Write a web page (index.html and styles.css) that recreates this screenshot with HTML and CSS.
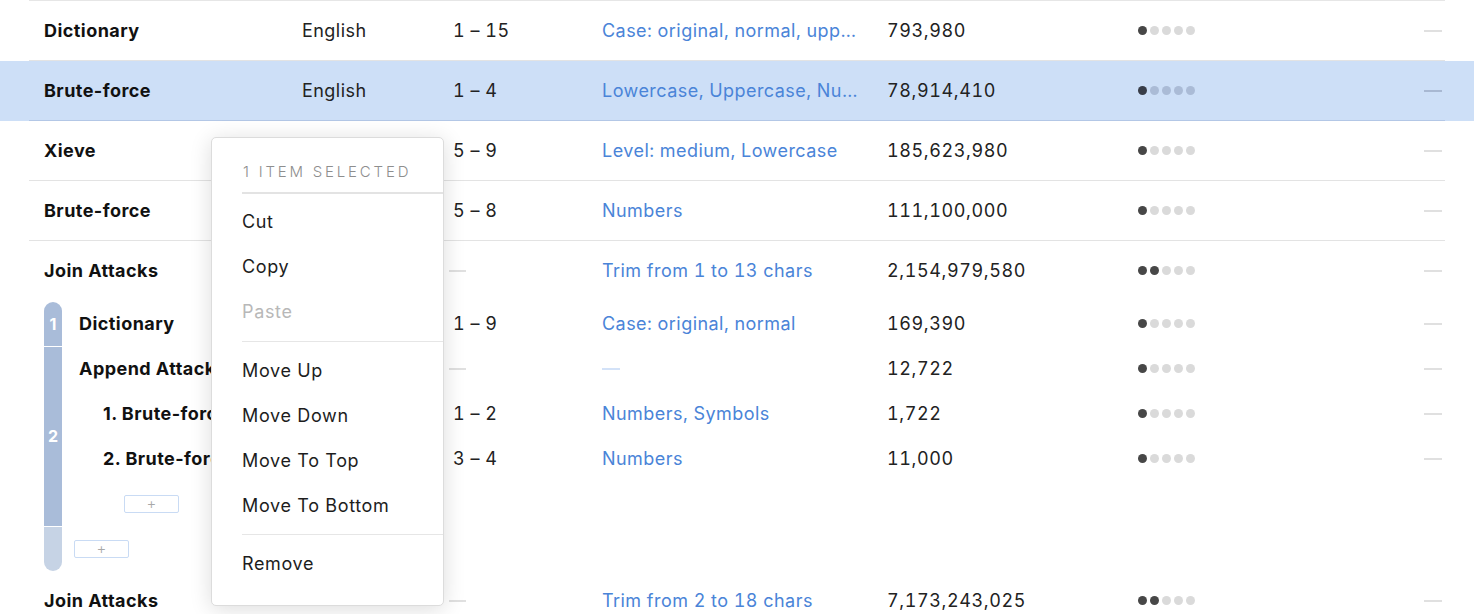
FILE: index.html
```html
<!DOCTYPE html>
<html>
<head>
<meta charset="utf-8">
<link rel="stylesheet" href="styles.css">
</head>
<body>
<div class="page">
  <div class="table">
    <div class="row">
      <div class="row-inner">
        <div class="c-name">Dictionary</div>
        <div class="c-lang">English</div>
        <div class="c-len">1 – 15</div>
        <div class="c-rules"><span class="ellip">Case: original, normal, uppercase, lowercase</span></div>
        <div class="c-count">793,980</div>
        <div class="c-dots"><span class="dots"><i class="on"></i><i></i><i></i><i></i><i></i></span></div>
        <div class="c-dash"><span class="dash"></span></div>
      </div>
    </div>
    <div class="row selected">
      <div class="row-inner">
        <div class="c-name">Brute-force</div>
        <div class="c-lang">English</div>
        <div class="c-len">1 – 4</div>
        <div class="c-rules"><span class="ellip">Lowercase, Uppercase, Numbers, Symbols</span></div>
        <div class="c-count">78,914,410</div>
        <div class="c-dots"><span class="dots"><i class="on"></i><i></i><i></i><i></i><i></i></span></div>
        <div class="c-dash"><span class="dash"></span></div>
      </div>
    </div>
    <div class="row">
      <div class="row-inner">
        <div class="c-name">Xieve</div>
        <div class="c-lang">English</div>
        <div class="c-len">5 – 9</div>
        <div class="c-rules"><span class="ellip">Level: medium, Lowercase</span></div>
        <div class="c-count">185,623,980</div>
        <div class="c-dots"><span class="dots"><i class="on"></i><i></i><i></i><i></i><i></i></span></div>
        <div class="c-dash"><span class="dash"></span></div>
      </div>
    </div>
    <div class="row">
      <div class="row-inner">
        <div class="c-name">Brute-force</div>
        <div class="c-lang">English</div>
        <div class="c-len">5 – 8</div>
        <div class="c-rules"><span class="ellip">Numbers</span></div>
        <div class="c-count">111,100,000</div>
        <div class="c-dots"><span class="dots"><i class="on"></i><i></i><i></i><i></i><i></i></span></div>
        <div class="c-dash"><span class="dash"></span></div>
      </div>
    </div>
    <div class="row">
      <div class="row-inner no-border">
        <div class="c-name">Join Attacks</div>
        <div class="c-lang"></div>
        <div class="c-len"><span class="dash"></span></div>
        <div class="c-rules"><span class="ellip">Trim from 1 to 13 chars</span></div>
        <div class="c-count">2,154,979,580</div>
        <div class="c-dots"><span class="dots"><i class="on"></i><i class="on"></i><i></i><i></i><i></i></span></div>
        <div class="c-dash"><span class="dash"></span></div>
      </div>
    </div>

    <div class="group">
      <div class="bar">
        <div class="seg seg-1">1</div>
        <div class="seg seg-2">2</div>
        <div class="seg seg-3"></div>
      </div>
      <div class="sub-rows">
        <div class="sub-row">
          <div class="s-name lvl1">Dictionary</div>
          <div class="c-lang"></div>
          <div class="c-len">1 – 9</div>
          <div class="c-rules"><span class="ellip">Case: original, normal</span></div>
          <div class="c-count">169,390</div>
          <div class="c-dots"><span class="dots"><i class="on"></i><i></i><i></i><i></i><i></i></span></div>
          <div class="c-dash"><span class="dash"></span></div>
        </div>
        <div class="sub-row">
          <div class="s-name lvl1">Append Attack</div>
          <div class="c-lang"></div>
          <div class="c-len"><span class="dash"></span></div>
          <div class="c-rules"><span class="dash blue"></span></div>
          <div class="c-count">12,722</div>
          <div class="c-dots"><span class="dots"><i class="on"></i><i></i><i></i><i></i><i></i></span></div>
          <div class="c-dash"><span class="dash"></span></div>
        </div>
        <div class="sub-row">
          <div class="s-name lvl2">1. Brute-force</div>
          <div class="c-lang"></div>
          <div class="c-len">1 – 2</div>
          <div class="c-rules"><span class="ellip">Numbers, Symbols</span></div>
          <div class="c-count">1,722</div>
          <div class="c-dots"><span class="dots"><i class="on"></i><i></i><i></i><i></i><i></i></span></div>
          <div class="c-dash"><span class="dash"></span></div>
        </div>
        <div class="sub-row">
          <div class="s-name lvl2">2. Brute-force</div>
          <div class="c-lang"></div>
          <div class="c-len">3 – 4</div>
          <div class="c-rules"><span class="ellip">Numbers</span></div>
          <div class="c-count">11,000</div>
          <div class="c-dots"><span class="dots"><i class="on"></i><i></i><i></i><i></i><i></i></span></div>
          <div class="c-dash"><span class="dash"></span></div>
        </div>
        <div class="sub-row add-row">
          <button class="add add-inner">+</button>
        </div>
        <div class="sub-row add-row">
          <button class="add add-outer">+</button>
        </div>
      </div>
    </div>

    <div class="row">
      <div class="row-inner no-border">
        <div class="c-name">Join Attacks</div>
        <div class="c-lang"></div>
        <div class="c-len"><span class="dash"></span></div>
        <div class="c-rules"><span class="ellip">Trim from 2 to 18 chars</span></div>
        <div class="c-count">7,173,243,025</div>
        <div class="c-dots"><span class="dots"><i class="on"></i><i class="on"></i><i></i><i></i><i></i></span></div>
        <div class="c-dash"><span class="dash"></span></div>
      </div>
    </div>
  </div>

  <div class="menu">
    <div class="menu-head">1 ITEM SELECTED</div>
    <div class="menu-sep thick"></div>
    <div class="menu-group first">
      <div class="menu-item">Cut</div>
      <div class="menu-item">Copy</div>
      <div class="menu-item disabled">Paste</div>
    </div>
    <div class="menu-sep"></div>
    <div class="menu-group">
      <div class="menu-item">Move Up</div>
      <div class="menu-item">Move Down</div>
      <div class="menu-item">Move To Top</div>
      <div class="menu-item">Move To Bottom</div>
    </div>
    <div class="menu-sep"></div>
    <div class="menu-group">
      <div class="menu-item">Remove</div>
    </div>
  </div>
</div>
</body>
</html>
```

FILE: styles.css
```css
* { box-sizing: border-box; }
html, body {
  margin: 0;
  padding: 0;
  background: #ffffff;
  overflow: hidden;
}
body {
  font-family: Inter, "Noto Sans", "Liberation Sans", sans-serif;
  font-size: 18px;
  letter-spacing: 0.45px;
  color: #222;
}
.page {
  position: relative;
  width: 1474px;
  height: 614px;
  overflow: hidden;
}
.table {
  border-top: 1px solid #e6e6e6;
  margin: 0 29px;
}
.table > .row {
  margin: 0 -29px;
}
.row-inner {
  margin: 0 29px;
  height: 60px;
  border-bottom: 1px solid #e3e3e3;
  display: grid;
  grid-template-columns: 273px 151px 149px 285px 251px 1fr 21px;
  align-items: center;
}
.row-inner.no-border { border-bottom: none; padding-bottom: 1px; }
.row.selected { background: #cddff7; }
.row.selected .row-inner { border-bottom-color: #b3c7e6; }

.c-name {
  padding-left: 15px;
  font-weight: 700;
  color: #111;
  white-space: nowrap;
}
.c-lang, .c-len, .c-count {
  color: #222;
  white-space: nowrap;
}
.c-len, .c-count, .c-rules { font-variant-numeric: tabular-nums; }
.c-len { letter-spacing: 0.5px; }
.c-count { letter-spacing: 0.6px; }
.c-rules {
  color: #4a84d8;
  white-space: nowrap;
  overflow: hidden;
}
.ellip {
  display: block;
  max-width: 258px;
  overflow: hidden;
  text-overflow: ellipsis;
  white-space: nowrap;
}
.c-dots { display: flex; align-items: center; }
.dots {
  display: inline-flex;
  gap: 3px;
}
.dots i {
  display: block;
  width: 9px;
  height: 9px;
  border-radius: 50%;
  background: #dadada;
}
.dots i.on { background: #474747; }
.row.selected .dots i { background: #aabbd6; }
.row.selected .dots i.on { background: #383d48; }

.c-dash { display: flex; align-items: center; }
.dash {
  display: block;
  width: 18px;
  height: 2px;
  background: #e0e0e0;
}
.c-len .dash { width: 17px; margin-left: -4px; }
.dash.blue { background: #d3e2f8; width: 18px; }
.row.selected .dash { background: #a8b8d2; }

/* nested group */
.group {
  display: flex;
  align-items: flex-start;
  height: 270px;
}
.bar {
  margin-left: 15px;
  margin-top: 1px;
  width: 18px;
  display: flex;
  flex-direction: column;
  gap: 1px;
  flex-shrink: 0;
}
.seg {
  background: #a9bcd9;
  color: #ffffff;
  font-weight: 700;
  font-size: 16px;
  letter-spacing: 0;
  display: flex;
  align-items: center;
  justify-content: center;
}
.seg-1 { height: 44px; border-radius: 9px 9px 0 0; }
.seg-2 { height: 179px; padding-bottom: 2px; }
.seg-3 { height: 44px; background: #c6d3e5; border-radius: 0 0 9px 9px; }

.sub-rows { flex: 1; }
.sub-row {
  height: 45px;
  display: grid;
  grid-template-columns: 240px 151px 149px 285px 251px 1fr 21px;
  align-items: center;
}
.s-name {
  font-weight: 700;
  color: #111;
  white-space: nowrap;
  overflow: hidden;
}
.s-name.lvl1 { padding-left: 17px; }
.s-name.lvl2 { padding-left: 41px; }
.add-row { display: flex; align-items: center; }
.add {
  width: 55px;
  height: 18px;
  border: 1px solid #c9dbf4;
  border-radius: 2px;
  background: #fff;
  color: #a8a8a8;
  font-family: Inter, sans-serif;
  font-size: 15px;
  font-weight: 300;
  line-height: 14px;
  padding: 0;
  display: flex;
  align-items: center;
  justify-content: center;
}
.add-inner { margin-left: 62px; }
.add-outer { margin-left: 12px; }

/* context menu */
.menu {
  position: absolute;
  left: 211px;
  top: 137px;
  width: 233px;
  height: 469px;
  background: #fff;
  border: 1px solid #dcdcdc;
  border-radius: 5px;
  box-shadow: 0 3px 22px rgba(0, 0, 0, 0.14);
  padding-top: 21px;
}
.menu-head {
  padding-left: 31px;
  height: 26px;
  line-height: 26px;
  font-size: 15px;
  font-weight: 300;
  letter-spacing: 2.8px;
  color: #8e8e8e;
}
.menu-sep {
  margin-left: 30px;
  height: 1px;
  background: #e6e6e6;
}
.menu-sep.thick {
  height: 2px;
  background: #e3e3e3;
  margin-top: 7px;
}
.menu-group {
  padding: 6px 0 6px;
}
.menu-group.first { padding: 5px 0 7px; }
.menu-item {
  height: 45px;
  line-height: 45px;
  padding-left: 30px;
  color: #1d1d1d;
  letter-spacing: 0.65px;
}
.menu-item.disabled { color: #b8b8b8; }
```
